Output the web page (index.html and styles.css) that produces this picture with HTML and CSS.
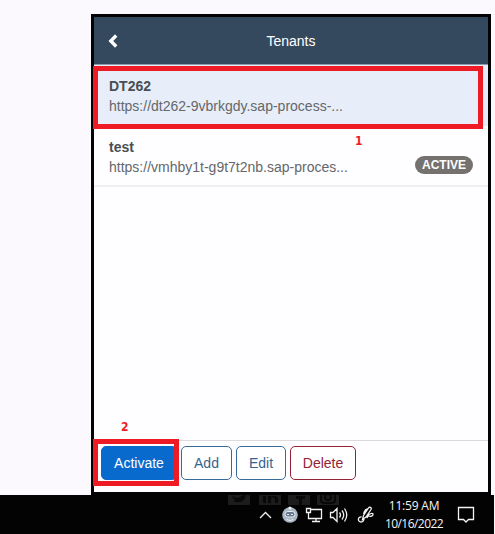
FILE: index.html
```html
<!DOCTYPE html>
<html lang="en">
<head>
<meta charset="utf-8">
<title>Tenants</title>
<link rel="stylesheet" href="styles.css">
</head>
<body>
<main class="panel">
  <header class="header">
    <svg class="back" width="10" height="14" viewBox="0 0 10 14"><path d="M8.2 1.5 2.8 7l5.4 5.5" fill="none" stroke="#fff" stroke-width="3.3"/></svg>
    <h1 class="title">Tenants</h1>
  </header>
  <ul class="list">
    <li class="row selected">
      <div><div class="name">DT262</div><div class="url">https://dt262-9vbrkgdy.sap-process-...</div></div>
    </li>
    <li class="row">
      <div><div class="name">test</div><div class="url">https://vmhby1t-g9t7t2nb.sap-proces...</div></div>
      <span class="badge">ACTIVE</span>
    </li>
  </ul>
  <footer class="footer">
    <button class="btn primary">Activate</button>
    <button class="btn add">Add</button>
    <button class="btn edit">Edit</button>
    <button class="btn delete">Delete</button>
  </footer>
  <div class="mark mark-row"></div>
  <div class="mark mark-button"></div>
  <span class="step step-one">1</span>
  <span class="step step-two">2</span>
</main>
<div class="taskbar">
  <svg class="ghost" width="112" height="12" viewBox="0 0 112 12">
    <g fill="#1c1c1c"><path d="M0 0h22v10H0zM31 0h22v10H31zM60 0h22v10H60zM89 0h22v10H89z"/></g>
    <g fill="#080808"><path d="M4 0c2 3 5 3 7 3 1-2 3-3 7-3l-1 3c-2 5-9 5-12 3l3-1c-3-1-4-3-4-5zM35 1h3v7h-3zM40 1h3v1c3-2 7-1 7 2v4h-3V4c0-2-4-2-4 0v4h-3zM71 10V4h-3V1h9v3h-3v6z"/></g>
    <g fill="none" stroke="#080808" stroke-width="2"><path d="M93 0v5q0 3 3 3h8q3 0 3-3V0"/><circle cx="100" cy="2" r="3"/></g>
  </svg>
  <svg class="tray" width="116" height="24" viewBox="0 0 116 24" fill="none" stroke="#f2f2f2" stroke-width="1.3">
    <path d="m1 15 5.500-5.500L12 15"/>
    <g stroke="none"><circle cx="31" cy="12" r="7.800" fill="#a9b7c5"/><circle cx="31" cy="5" r="1.600" fill="#edf2f6"/></g>
    <g stroke="#e8eef4" stroke-width="1"><rect x="26" y="8.500" width="10" height="5.500" rx="2.750" fill="#66788b"/><path d="M28 11.500h2m2 0h2M27.500 16.500q3.500 2 7 0"/></g>
    <path d="M52 6.500h10.500v9H50M57 15.500v3M53 18.500h8M47.500 5.500h4v4h-4zM49.500 9.500v6H53"/>
    <path d="M71.500 9.500H74l4-4v13l-4-4h-2.500zM80.500 9.500q2 2.500 0 5M83 7.500q3.500 4.500 0 9M85.500 5.500q4.500 6.500 0 13"/>
    <path d="M102.500 14c-4-.5-4 5-.5 5 2.500 0 3-2 3-4M103.500 16.500l1-4 5-7.500c1-1.500 3.500-.5 2.500 1.500l-5 7.500zM104.500 11c1-3 3-5 4-5M110 10.500l-2 4.500M109 12.500c3-3 5-2.500 5-1s-2.500 2.500-4.500 1.500"/>
  </svg>
  <div class="clock"><div class="time">11:59 AM</div><div class="date">10/16/2022</div></div>
  <svg class="note" width="18" height="18" viewBox="0 0 18 18"><path d="M1.500 1.500h15v12h-5L9 16l-2.500-2.500h-5z" fill="none" stroke="#f4f4f4" stroke-width="1.300"/></svg>
</div>
</body>
</html>
```
FILE: styles.css
```css
* { box-sizing: border-box; }
body { margin: 0; padding-top: 14px; width: 495px; height: 534px; overflow: hidden; background: #fbf9fd; font-family: "Liberation Sans", Arial, sans-serif; font-size: 14px; }
.panel { position: relative; display: flex; flex-direction: column; width: 400px; height: 481px; margin-left: 91px; border: 3px solid #030303; background: #fefdff; }
.header { display: grid; grid-template-columns: 40px 1fr 40px; align-items: center; height: 48px; flex: none; background: #35495e; border-bottom: 1px solid #8c9aaa; }
.back { margin: 1px 0 0 14px; }
.title { margin: 0; font-size: 14px; font-weight: 400; color: #fff; text-align: center; }
.list { list-style: none; margin: 0; padding: 0; flex: 1; }
.row { display: flex; justify-content: space-between; align-items: center; height: 61px; padding: 2px 15px 0; border-bottom: 2px solid #eeeff0; }
.selected { background: #e7eef9; border-color: #e7eef9; }
.name { font-weight: 700; line-height: 20px; color: #4a4e52; }
.url { line-height: 20px; color: #65676a; white-space: nowrap; }
.badge { width: 58px; height: 18px; margin-top: 16px; border-radius: 9px; background: #75716f; color: #fff; font-size: 12px; font-weight: 700; line-height: 18px; text-align: center; }
.footer { display: flex; gap: 4px; height: 52px; padding: 5px 7px; border-top: 1px solid #dddadd; }
.btn { width: 51px; height: 34px; padding: 0; border: 1px solid #376b99; border-radius: 5px; background: #fff; color: #33648f; font: inherit; }
.primary { width: 76px; border-color: #096ace; background: #096ace; color: #fff; }
.edit { width: 50px; }
.delete { width: 66px; color: #922335; border-color: #922335; }
.mark { position: absolute; border: 5px solid #ee1b24; }
.mark-row { left: -1px; top: 49px; width: 390px; height: 63px; }
.mark-button { left: -1px; top: 422px; width: 86px; height: 47px; }
.step { position: absolute; color: #ee1b24; font: 700 12px/14px "DejaVu Sans Condensed", "DejaVu Sans", sans-serif; }
.step-one { left: 261px; top: 117px; }
.step-two { left: 27px; top: 403px; }
.taskbar { position: relative; display: flex; width: 494px; height: 39px; padding-left: 259px; background: #030303; color: #f4f4f4; }
.ghost { position: absolute; left: 228px; top: 0; }
.tray { margin-top: 8px; flex: none; }
.clock { width: 78px; font: 12px/18px "Open Sans", sans-serif; text-align: center; padding-top: 2px; }
.time { letter-spacing: -.2px; }
.date { letter-spacing: -.55px; }
.note { margin: 11px 0 0 4px; }
```
